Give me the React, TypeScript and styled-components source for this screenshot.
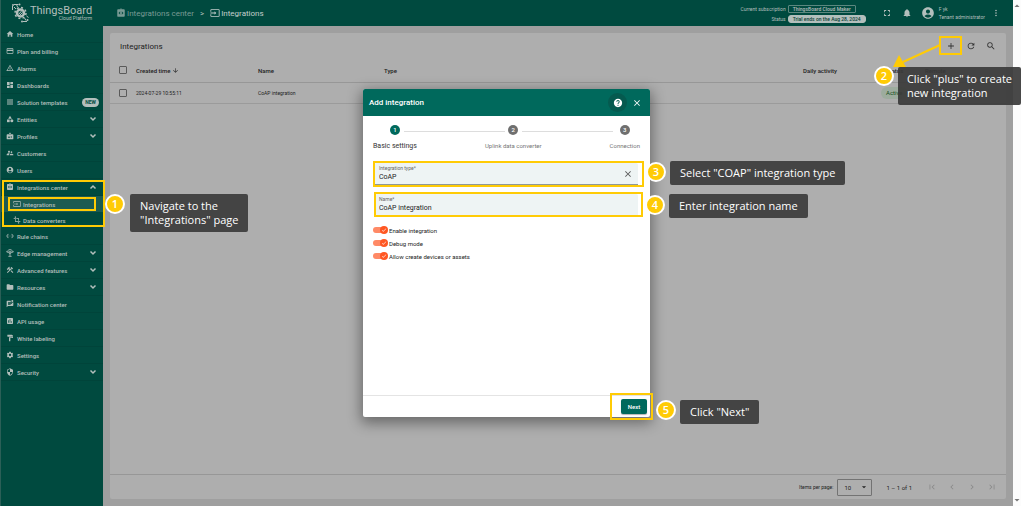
import React from 'react';
import styled, { createGlobalStyle, css } from 'styled-components';
import type { IconType } from 'react-icons';
import {
  MdHome, MdPayment, MdWarningAmber, MdDashboard, MdApps, MdCategory, MdBadge,
  MdSupervisorAccount, MdAccountCircle, MdIntegrationInstructions, MdInput, MdTransform,
  MdSettingsEthernet, MdConstruction, MdFolder, MdMarkUnreadChatAlt, MdInsertChart,
  MdFormatPaint, MdSettings, MdSecurity, MdFullscreen,
  MdNotifications, MdMoreVert, MdAdd, MdRefresh, MdSearch, MdArrowDownward, MdHelp,
  MdClose, MdCheck, MdFirstPage, MdChevronLeft, MdChevronRight, MdLastPage,
  MdArrowDropDown, MdArrowDropUp, MdDelete, MdDevicesOther,
} from 'react-icons/md';

const yellow = '#ffcb05';
const green = '#004a3f';
const pale = '#b3bfbc';

const GlobalStyle = createGlobalStyle`
  * { box-sizing: border-box; }
  body { margin: 0; overflow: hidden; font-family: Roboto, "Liberation Sans", sans-serif; color: #222; }
  button, input, select { font: inherit; color: inherit; border: 0; padding: 0; margin: 0; background: none; }
  button { display: inline-flex; align-items: center; justify-content: center; cursor: pointer; }
  a { color: inherit; text-decoration: none; }
  svg { display: block; flex: none; }
`;

const Shell = styled.div`
  position: relative;
  display: grid;
  grid-template-columns: 103px minmax(0, 1fr) 8px;
  min-height: 100vh;
  background: #9f9f9f;
`;

/* Sidebar */
const Sidebar = styled.aside`
  background: ${green};
  color: ${pale};
  border-left: 1px solid #2b5f57;
`;
const Brand = styled.a`
  display: flex;
  align-items: center;
  gap: 1px;
  height: 26px;
  padding-left: 10px;
`;
const BrandText = styled.span`
  display: flex;
  flex-direction: column;
  align-items: flex-end;
  font-size: 11px;
  line-height: 11px;
`;
const BrandSub = styled.small`
  font-size: 5px;
  line-height: 5px;
`;
const NavGroup = styled.div`
  position: relative;
`;
const NavLink = styled.a<{ $child?: boolean; $active?: boolean }>`
  position: relative;
  display: flex;
  align-items: center;
  gap: ${p => (p.$child ? 2 : 3)}px;
  height: ${p => (p.$child ? 16 : 17)}px;
  padding: 0 6px 0 ${p => (p.$child ? 12 : 5)}px;
  font-size: 6px;
  font-weight: 500;
  white-space: nowrap;
  background: ${p => (p.$active ? '#1c5b51' : 'transparent')};
  border-bottom: ${p => (p.$child ? 0 : 1)}px solid #00443a;
`;
const NavText = styled.span`
  flex: 1;
`;
const NewTag = styled.span`
  margin-right: -2px;
  padding: 0 3px;
  border-radius: 5px;
  background: ${pale};
  color: ${green};
  font-size: 5px;
  line-height: 9px;
  font-weight: 700;
`;

/* Main area */
const Main = styled.main`
  display: flex;
  flex-direction: column;
`;
const TopBar = styled.header`
  display: flex;
  align-items: center;
  height: 26px;
  padding: 0 12px 0 13px;
  background: ${green};
  color: ${pale};
`;
const Crumbs = styled.nav`
  display: flex;
  align-items: center;
  gap: 6px;
  flex: 1;
  font-size: 8px;
`;
const Crumb = styled.a<{ $current?: boolean }>`
  display: flex;
  align-items: center;
  gap: 1px;
  color: ${p => (p.$current ? '#c3cecb' : '#7a9b95')};
`;
const Subscription = styled.dl`
  display: grid;
  grid-template-columns: auto auto;
  gap: 2px;
  justify-items: start;
  align-items: center;
  margin: 2px 11px 0 0;
  font-size: 5px;
  line-height: 6px;
`;
const SubLabel = styled.dt`
  justify-self: end;
`;
const SubValue = styled.dd<{ $filled?: boolean }>`
  margin: 0;
  padding: 0 4px;
  border: 1px solid ${p => (p.$filled ? pale : '#5c877f')};
  border-radius: ${p => (p.$filled ? 3 : 1)}px;
  background: ${p => (p.$filled ? pale : 'transparent')};
  color: ${p => (p.$filled ? '#0b3f37' : pale)};
  font-weight: 500;
`;
const BarButton = styled.button`
  width: 20px;
  height: 20px;
`;
const UserButton = styled.button`
  gap: 4px;
  margin: 0 6px 0 4px;
  font-size: 5px;
  line-height: 8px;
  text-align: left;
`;
const UserLines = styled.span`
  display: grid;
`;

const Card = styled.section`
  display: flex;
  flex-direction: column;
  flex: 1;
  margin: 7px;
  background: #aeaeae;
  border-radius: 2px;
`;
const CardHead = styled.div`
  display: flex;
  align-items: center;
  height: 26px;
  padding: 0 5px 0 10px;
`;
const CardTitle = styled.h1`
  flex: 1;
  margin: 0;
  font-size: 8px;
  font-weight: 400;
`;
const ToolButton = styled.button`
  position: relative;
  width: 20px;
  height: 20px;
  color: #333;
`;
const Grid = styled.table`
  width: 100%;
  table-layout: fixed;
  border-collapse: collapse;
  font-size: 6px;
  text-align: left;
  white-space: nowrap;
`;
const Col = styled.col<{ $w?: number }>`
  width: ${p => (p.$w ? `${p.$w}px` : 'auto')};
`;
const Head = styled.th`
  height: 23px;
  padding: 0;
  font-weight: 500;
  border-bottom: 1px solid #979797;
`;
const Cell = styled.td`
  height: 21px;
  padding: 0;
  font-size: 5px;
  border-bottom: 1px solid #9b9b9b;
`;
const Sorted = styled.span`
  display: flex;
  align-items: center;
  gap: 2px;
`;
const Tick = styled.input`
  appearance: none;
  display: block;
  width: 8px;
  height: 8px;
  margin-left: 9px;
  border: 1px solid #5a5a5a;
  border-radius: 1px;
`;
const Chip = styled.span`
  display: inline-block;
  margin-left: -5px;
  padding: 0 5px;
  border-radius: 6px;
  background: #9dac9e;
  color: #14501a;
  font-size: 6px;
  line-height: 12px;
`;
const Pager = styled.footer`
  display: flex;
  align-items: center;
  justify-content: flex-end;
  height: 25px;
  margin-top: auto;
  padding-right: 4px;
  border-top: 1px solid #979797;
  font-size: 5px;
`;
const SizeLabel = styled.label`
  display: flex;
  align-items: center;
  gap: 4px;
`;
const SelectWrap = styled.span`
  display: grid;
  grid-template-columns: 1fr 12px;
  align-items: center;
  width: 35px;
  height: 17px;
  border: 1px solid #737373;
  border-radius: 1px;
  font-size: 6px;
`;
const SizeSelect = styled.select`
  grid-area: 1 / 1 / 2 / 3;
  appearance: none;
  height: 15px;
  padding-left: 6px;
`;
const SelectArrow = styled.span`
  grid-area: 1 / 2;
  pointer-events: none;
`;
const Range = styled.span`
  margin: 0 10px 0 14px;
  font-size: 6px;
`;
const PageButton = styled.button`
  width: 20px;
  height: 16px;
  color: #8a8a8a;
`;
const ScrollRail = styled.div`
  display: flex;
  flex-direction: column;
  align-items: center;
  justify-content: space-between;
  background: #fcfcfc;
  color: #777;
`;

/* Dialog */
const Overlay = styled.div`
  position: absolute;
  inset: 0 8px 0 0;
  z-index: 5;
  display: grid;
  place-items: center;
  pointer-events: none;
`;
const Dialog = styled.section`
  display: flex;
  flex-direction: column;
  width: 287px;
  min-height: 328px;
  background: #fff;
  border-radius: 2px;
  box-shadow: 0 4px 14px 2px rgba(0, 0, 0, 0.4);
  pointer-events: auto;
`;
const DialogHead = styled.header`
  display: flex;
  align-items: center;
  height: 27px;
  padding: 0 4px 0 6px;
  border-radius: 2px 2px 0 0;
  background: #00695c;
  color: #fff;
`;
const DialogTitle = styled.h2`
  flex: 1;
  margin: 0;
  font-size: 8px;
  font-weight: 500;
`;
const HeadButton = styled.button<{ $shaded?: boolean }>`
  width: 19px;
  height: 19px;
  border-radius: 50%;
  background: ${p => (p.$shaded ? '#055a4f' : 'transparent')};
`;
const DialogBody = styled.form`
  display: flex;
  flex-direction: column;
  flex: 1;
  padding: 9px 10px 0;
`;
const Stepper = styled.ol`
  display: flex;
  margin: 0 0 12px;
  padding: 0;
  list-style: none;
`;
const Step = styled.li<{ $active?: boolean }>`
  display: flex;
  flex-direction: column;
  align-items: center;
  gap: 6px;
  font-size: ${p => (p.$active ? 7 : 6)}px;
  line-height: 10px;
  color: ${p => (p.$active ? '#333' : '#777')};
`;
const StepDot = styled.span<{ $active?: boolean }>`
  width: 10px;
  height: 10px;
  border-radius: 50%;
  background: ${p => (p.$active ? '#00695c' : '#6f6f6f')};
  color: #fff;
  font-size: 6px;
  font-weight: 500;
  text-align: center;
`;
const StepLine = styled.li<{ $start: number; $end: number }>`
  flex: 1;
  padding-top: 6px;
  &::before {
    content: '';
    display: block;
    height: 1px;
    margin: 0 ${p => p.$end}px 0 ${p => p.$start}px;
    background: #ddd;
  }
`;
const Field = styled.div`
  position: relative;
  display: flex;
  align-items: center;
  height: 22px;
  margin: 0 2px 9px 1px;
  padding: 0 5px;
  border-bottom: 1px solid #8f9896;
  border-radius: 2px 2px 0 0;
  background: #eef4f4;
`;
const FieldStack = styled.div`
  display: grid;
  flex: 1;
`;
const FieldLabel = styled.label`
  font-size: 5px;
  line-height: 7px;
  color: #666;
`;
const FieldInput = styled.input`
  width: 100%;
  height: 10px;
  outline: none;
  font-size: 7px;
  color: #222;
`;
const Toggles = styled.div`
  display: grid;
  gap: 3px;
`;
const ToggleLabel = styled.label`
  display: flex;
  align-items: center;
  gap: 1px;
  height: 10px;
  font-size: 6px;
  color: #222;
`;
const ToggleTrack = styled.span`
  position: relative;
  display: flex;
  align-items: center;
  justify-content: flex-end;
  width: 15px;
  height: 8px;
  &::before {
    content: '';
    position: absolute;
    inset: 1px 2px 1px 0;
    border-radius: 3px;
    background: #ff8a66;
  }
`;
const ToggleInput = styled.input`
  position: absolute;
  inset: 0;
  opacity: 0;
`;
const ToggleKnob = styled.span`
  position: relative;
  display: grid;
  place-items: center;
  width: 8px;
  height: 8px;
  border-radius: 50%;
  background: #ff5722;
  color: #fff;
`;
const DialogFoot = styled.footer`
  display: flex;
  align-items: flex-start;
  justify-content: flex-end;
  height: 22px;
  padding: 3px 3px 0 0;
  border-top: 1px solid #e4e4e4;
`;
const NextWrap = styled.div`
  position: relative;
`;
const NextButton = styled.button`
  display: flex;
  width: 26px;
  height: 15px;
  border-radius: 2px;
  background: #00695c;
  color: #fff;
  font-size: 6px;
  font-weight: 500;
  box-shadow: 0 1px 1px rgba(0, 0, 0, 0.3);
`;

/* Tutorial annotations, anchored to the controls they explain */
type Box = { $top: number; $left?: number; $right?: number };
const place = css<Box>`
  position: absolute;
  top: ${p => p.$top}px;
  ${p => (p.$left !== undefined ? `left: ${p.$left}px;` : '')}
  ${p => (p.$right !== undefined ? `right: ${p.$right}px;` : '')}
`;
const Highlight = styled.span<{ $inset: string }>`
  position: absolute;
  z-index: 10;
  inset: ${p => p.$inset};
  border: 2px solid ${yellow};
  pointer-events: none;
`;
const Badge = styled.span<Box>`
  ${place}
  z-index: 12;
  width: 20px;
  height: 20px;
  border: 2px solid #fff;
  border-radius: 50%;
  background: ${yellow};
  color: #fff;
  font: 600 11px/16px "Open Sans", sans-serif;
  text-align: center;
`;
const Callout = styled.span<Box & { $sheer?: boolean }>`
  ${place}
  z-index: 11;
  padding: 5px ${p => (p.$sheer ? 9 : 10)}px;
  border-radius: 2px;
  background: ${p => (p.$sheer ? 'rgba(58, 58, 58, 0.92)' : '#444')};
  color: #fff;
  font: 500 11px/14px "Open Sans", sans-serif;
  text-align: left;
  white-space: nowrap;
`;
const Arrow = styled.svg<Box>`
  ${place}
  z-index: 11;
`;

const Logo = () => (
  <svg width="18" height="20" viewBox="0 0 36 40" fill="none" stroke={pale} strokeWidth="2">
    <circle cx="19" cy="20" r="7" strokeWidth="5" />
    <circle cx="19" cy="20" r="11" strokeWidth="3" strokeDasharray="4 4.6" />
    <path d="M16 22l5-6M18 24l5-5" strokeWidth="2" />
    <path d="M10 12L6 8M13 8L11 3M6 3H15M3 6V14M27 30l3 5M31 26l4 3M24 37h8" />
    <circle cx="4" cy="4" r="2" fill={pale} stroke="none" />
    <circle cx="17" cy="3" r="2" fill={pale} stroke="none" />
    <circle cx="33" cy="34" r="2" fill={pale} stroke="none" />
    <circle cx="22" cy="37" r="2" fill={pale} stroke="none" />
  </svg>
);

const EdgeIcon = () => (
  <svg width="8" height="8" viewBox="0 0 24 24" fill="none" stroke="currentColor" strokeWidth="2.4">
    <path d="M12 9v13M12 14L5 9M12 14l7-5M7 22h10" />
    <path d="M6 4a9 9 0 0 1 12 0" />
    <circle cx="12" cy="8" r="2" />
    <circle cx="4" cy="8" r="2" />
    <circle cx="20" cy="8" r="2" />
  </svg>
);

const Chevron = ({ up }: { up?: boolean }) => (
  <svg width="8" height="8" viewBox="0 0 16 16" fill="none" stroke="currentColor" strokeWidth="3">
    <path d={up ? 'M3 11l5-5 5 5' : 'M3 5l5 5 5-5'} />
  </svg>
);

type Item = { label: string; Icon: IconType | (() => React.ReactElement); more?: boolean; tag?: string };
const above: Item[] = [
  { label: 'Home', Icon: MdHome },
  { label: 'Plan and billing', Icon: MdPayment },
  { label: 'Alarms', Icon: MdWarningAmber },
  { label: 'Dashboards', Icon: MdDashboard },
  { label: 'Solution templates', Icon: MdApps, tag: 'NEW' },
  { label: 'Entities', Icon: MdCategory, more: true },
  { label: 'Profiles', Icon: MdBadge, more: true },
  { label: 'Customers', Icon: MdSupervisorAccount },
  { label: 'Users', Icon: MdAccountCircle },
];
const below: Item[] = [
  { label: 'Rule chains', Icon: MdSettingsEthernet },
  { label: 'Edge management', Icon: EdgeIcon, more: true },
  { label: 'Advanced features', Icon: MdConstruction, more: true },
  { label: 'Resources', Icon: MdFolder, more: true },
  { label: 'Notification center', Icon: MdMarkUnreadChatAlt },
  { label: 'API usage', Icon: MdInsertChart },
  { label: 'White labeling', Icon: MdFormatPaint },
  { label: 'Settings', Icon: MdSettings },
  { label: 'Security', Icon: MdSecurity, more: true },
];

const NavItem = ({ label, Icon, more, tag }: Item) => (
  <NavLink href="#">
    <Icon size={8} />
    <NavText>{label}</NavText>
    {tag && <NewTag>{tag}</NewTag>}
    {more && <Chevron />}
  </NavLink>
);

const Toggle = ({ label }: { label: string }) => (
  <ToggleLabel>
    <ToggleTrack>
      <ToggleInput type="checkbox" defaultChecked />
      <ToggleKnob><MdCheck size={6} /></ToggleKnob>
    </ToggleTrack>
    {label}
  </ToggleLabel>
);

export default function App() {
  return (
    <>
      <GlobalStyle />
      <Shell>
        <Sidebar>
          <Brand href="#">
            <Logo />
            <BrandText>
              ThingsBoard
              <BrandSub>Cloud Platform</BrandSub>
            </BrandText>
          </Brand>
          <nav>
            {above.map(item => <NavItem key={item.label} {...item} />)}
            <NavGroup>
              <NavLink href="#">
                <MdIntegrationInstructions size={8} />
                <NavText>Integrations center</NavText>
                <Chevron up />
              </NavLink>
              <NavLink href="#" $child $active>
                <MdInput size={8} />
                <NavText>Integrations</NavText>
                <Highlight $inset="1px 7px 1px 7px" />
              </NavLink>
              <NavLink href="#" $child>
                <MdTransform size={8} />
                <NavText>Data converters</NavText>
              </NavLink>
              <Highlight $inset="1px -2px 1px 1px" />
              <Badge $top={15} $left={104}>1</Badge>
              <Callout $top={15} $left={129}>Navigate to the<br />"Integrations" page</Callout>
            </NavGroup>
            {below.map(item => <NavItem key={item.label} {...item} />)}
          </nav>
        </Sidebar>

        <Main>
          <TopBar>
            <Crumbs aria-label="Breadcrumb">
              <Crumb href="#"><MdIntegrationInstructions size={10} />Integrations center</Crumb>
              <span>&gt;</span>
              <Crumb href="#" $current><MdInput size={10} />Integrations</Crumb>
            </Crumbs>
            <Subscription>
              <SubLabel>Current subscription</SubLabel>
              <SubValue>ThingsBoard Cloud Maker</SubValue>
              <SubLabel>Status</SubLabel>
              <SubValue $filled>Trial ends on the Aug 28, 2024</SubValue>
            </Subscription>
            <BarButton aria-label="Fullscreen"><MdFullscreen size={10} /></BarButton>
            <BarButton aria-label="Notifications"><MdNotifications size={10} /></BarButton>
            <UserButton>
              <MdAccountCircle size={14} />
              <UserLines><span>F yk</span><span>Tenant administrator</span></UserLines>
            </UserButton>
            <button aria-label="More"><MdMoreVert size={10} /></button>
          </TopBar>

          <Card>
            <CardHead>
              <CardTitle>Integrations</CardTitle>
              <ToolButton aria-label="Add integration">
                <MdAdd size={10} />
                <Highlight $inset="0 -1px 1px -2px" />
                <Arrow $top={8} $right={20} width="50" height="24" viewBox="0 0 50 24">
                  <path d="M49 1L12 18" stroke={yellow} strokeWidth="2" />
                  <path d="M2 23L8 11L15 23Z" fill={yellow} />
                </Arrow>
                <Badge $top={30} $right={67}>2</Badge>
                <Callout $top={31} $right={-60} $sheer>Click "plus" to create<br />new integration</Callout>
              </ToolButton>
              <ToolButton aria-label="Refresh"><MdRefresh size={10} /></ToolButton>
              <ToolButton aria-label="Search"><MdSearch size={10} /></ToolButton>
            </CardHead>
            <Grid>
              <colgroup>
                <Col $w={26} /><Col $w={122} /><Col $w={126} /><Col />
                <Col $w={83} /><Col $w={39} /><Col $w={40} /><Col $w={41} />
              </colgroup>
              <thead>
                <tr>
                  <Head><Tick type="checkbox" aria-label="Select all" /></Head>
                  <Head><Sorted>Created time <MdArrowDownward size={7} /></Sorted></Head>
                  <Head>Name</Head>
                  <Head>Type</Head>
                  <Head>Daily activity</Head>
                  <Head>Status</Head>
                  <Head>Remote</Head>
                  <Head />
                </tr>
              </thead>
              <tbody>
                <tr>
                  <Cell><Tick type="checkbox" aria-label="Select row" /></Cell>
                  <Cell>2024-07-29 10:55:11</Cell>
                  <Cell>CoAP integration</Cell>
                  <Cell />
                  <Cell />
                  <Cell><Chip>Active</Chip></Cell>
                  <Cell><MdDevicesOther size={8} /></Cell>
                  <Cell><MdDelete size={8} /></Cell>
                </tr>
              </tbody>
            </Grid>
            <Pager>
              <SizeLabel>
                Items per page:
                <SelectWrap>
                  <SizeSelect defaultValue="10"><option>10</option><option>20</option></SizeSelect>
                  <SelectArrow><MdArrowDropDown size={10} /></SelectArrow>
                </SelectWrap>
              </SizeLabel>
              <Range>1 – 1 of 1</Range>
              <PageButton aria-label="First page"><MdFirstPage size={10} /></PageButton>
              <PageButton aria-label="Previous page"><MdChevronLeft size={10} /></PageButton>
              <PageButton aria-label="Next page"><MdChevronRight size={10} /></PageButton>
              <PageButton aria-label="Last page"><MdLastPage size={10} /></PageButton>
            </Pager>
          </Card>
        </Main>
        <ScrollRail>
          <MdArrowDropUp size={12} />
          <MdArrowDropDown size={12} />
        </ScrollRail>

        <Overlay>
          <Dialog role="dialog" aria-label="Add integration">
            <DialogHead>
              <DialogTitle>Add integration</DialogTitle>
              <HeadButton $shaded aria-label="Help"><MdHelp size={10} /></HeadButton>
              <HeadButton aria-label="Close"><MdClose size={10} /></HeadButton>
            </DialogHead>
            <DialogBody>
              <Stepper>
                <Step $active><StepDot $active>1</StepDot>Basic settings</Step>
                <StepLine $start={-13} $end={-20} aria-hidden />
                <Step><StepDot>2</StepDot>Uplink data converter</Step>
                <StepLine $start={-20} $end={-3} aria-hidden />
                <Step><StepDot>3</StepDot>Connection</Step>
              </Stepper>
              <Field>
                <FieldStack>
                  <FieldLabel htmlFor="type">Integration type*</FieldLabel>
                  <FieldInput id="type" defaultValue="CoAP" />
                </FieldStack>
                <button type="button" aria-label="Clear"><MdClose size={10} color="#555" /></button>
                <Highlight $inset="-2px -6px -3px -1px" />
                <Badge $top={-1} $right={-28}>3</Badge>
                <Callout $top={-2} $left={296}>Select "COAP" integration type</Callout>
              </Field>
              <Field>
                <FieldStack>
                  <FieldLabel htmlFor="name">Name*</FieldLabel>
                  <FieldInput id="name" defaultValue="CoAP integration" />
                </FieldStack>
                <Highlight $inset="-2px -5px -2px 0" />
                <Badge $top={1} $right={-27}>4</Badge>
                <Callout $top={0} $left={295}>Enter integration name</Callout>
              </Field>
              <Toggles>
                <Toggle label="Enable integration" />
                <Toggle label="Debug mode" />
                <Toggle label="Allow create devices or assets" />
              </Toggles>
            </DialogBody>
            <DialogFoot>
              <NextWrap>
                <NextButton type="button">Next</NextButton>
                <Highlight $inset="-6px -6px -6px -11px" />
                <Badge $top={1} $left={35}>5</Badge>
                <Callout $top={1} $left={59}>Click "Next"</Callout>
              </NextWrap>
            </DialogFoot>
          </Dialog>
        </Overlay>
      </Shell>
    </>
  );
}
